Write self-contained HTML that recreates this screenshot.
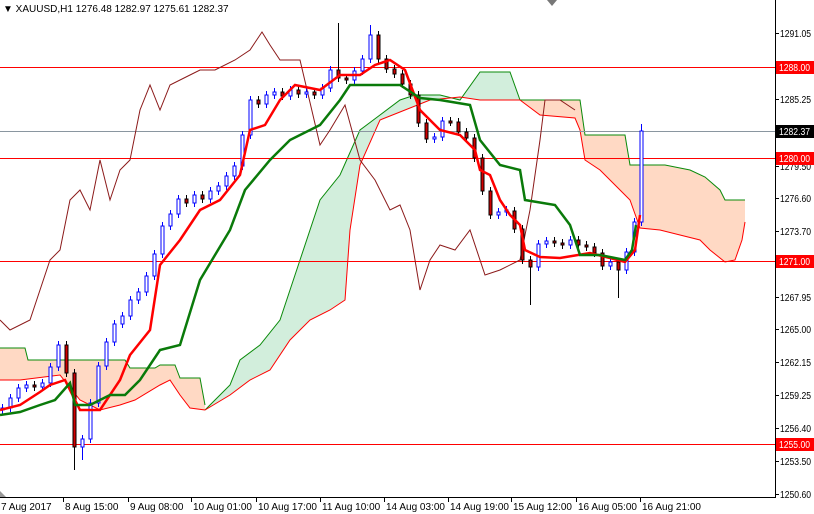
<!DOCTYPE html>
<html><head><meta charset="utf-8"><style>
html,body{margin:0;padding:0;background:#fff;width:814px;height:514px;overflow:hidden}
svg{display:block}
text{font-family:"Liberation Sans",sans-serif;font-size:10px;fill:#000}
</style></head><body>
<svg width="814" height="514" xmlns="http://www.w3.org/2000/svg">
<!-- clouds -->
<polygon points="0,348 25,348 28,360 125,360 130,368 155,368 160,365 175,365 180,378 200,378 205,405 205,410 190,408 180,395 170,380 160,385 135,400 120,405 100,410 80,400 60,375 20,380 0,380" fill="#ffd9c4"/>
<polyline points="0,348 25,348 28,360 125,360 130,368 155,368 160,365 175,365 180,378 200,378 205,405" fill="none" stroke="#0a8a0a"/>
<polyline points="0,380 20,380 60,375 80,400 100,410 120,405 135,400 160,385 170,380 180,395 190,408 205,410" fill="none" stroke="#f00"/>
<polygon points="205,410 215,400 230,385 240,360 260,345 280,320 300,260 320,200 340,175 360,130 380,115 400,100 415,95 440,95 460,100 480,72 510,72 520,100 530,100 480,100 460,97 430,100 400,112 380,120 360,165 350,230 345,300 330,310 310,320 290,340 270,370 250,380 230,395" fill="#d2eedc"/>
<polyline points="205,410 215,400 230,385 240,360 260,345 280,320 300,260 320,200 340,175 360,130 380,115 400,100 415,95 440,95 460,100 480,72 510,72 520,100 530,100" fill="none" stroke="#0a8a0a"/>
<polyline points="205,410 230,395 250,380 270,370 290,340 310,320 330,310 345,300 350,230 360,165 380,120 400,112 430,100 460,97 480,100 530,100" fill="none" stroke="#f00"/>
<polygon points="520,100 580,100 585,135 625,135 630,165 665,165 690,170 705,177 720,190 725,200 745,200 745,222 742,240 735,260 725,262 710,250 700,240 680,235 660,230 640,228 630,200 620,190 600,170 585,160 580,130 575,118 540,115" fill="#ffd9c4"/>
<polyline points="520,100 580,100 585,135 625,135 630,165 665,165 690,170 705,177 720,190 725,200 745,200" fill="none" stroke="#0a8a0a"/>
<polyline points="520,100 540,115 575,118 580,130 585,160 600,170 620,190 630,200 640,228 660,230 680,235 700,240 710,250 725,262 735,260 742,240 745,222" fill="none" stroke="#f00"/>
<!-- levels -->
<line x1="0" y1="67.5" x2="775" y2="67.5" stroke="#f00"/>
<line x1="0" y1="131.5" x2="775" y2="131.5" stroke="#8a96a0"/>
<line x1="0" y1="158.5" x2="775" y2="158.5" stroke="#f00"/>
<line x1="0" y1="261.5" x2="775" y2="261.5" stroke="#f00"/>
<line x1="0" y1="444.5" x2="775" y2="444.5" stroke="#f00"/>
<!-- chikou -->
<polyline points="0,320 10,330 30,320 50,260 60,250 70,200 80,190 90,210 100,160 110,200 120,170 130,160 140,110 150,85 160,110 170,85 190,75 200,70 215,70 235,60 250,50 262,32 270,45 280,60 300,60 320,145 330,130 345,105 360,160 375,180 390,210 400,205 410,230 420,290 430,260 440,245 455,250 470,230 485,275 500,270 520,260 530,210 540,140 545,100 560,100 575,110" fill="none" stroke="#8b1a1a"/>
<!-- candles -->
<path d="M2.5 404V414M10.5 394V412M18.5 384V402M26.5 381V392M42.5 379V391M50.5 363V387M58.5 341V371M82.5 435V460M90.5 399V443M98.5 362V407M106.5 338V370M114.5 320V346M122.5 312V328M130.5 296V320M138.5 288V304M146.5 272V296M154.5 250V280M162.5 222V258M170.5 210V230M178.5 195V218M194.5 191V207M210.5 187V203M218.5 182V195M226.5 172V190M234.5 162V180M242.5 131V170M250.5 96V139M266.5 91V108M274.5 88V99M290.5 86V100M306.5 88V98M322.5 84V99M330.5 66V92M354.5 67V84M362.5 55V75M370.5 25V63M434.5 133V143M442.5 117V141M498.5 208V219M506.5 206V216M538.5 240V271M546.5 237V248M570.5 236V249M610.5 258V270M626.5 248V274M634.5 218V256M641.5 124V226" stroke="#00f" fill="none"/>
<path d="M34.5 381V391M66.5 341V377M74.5 369V470M186.5 195V207M202.5 191V203M258.5 96V108M282.5 88V100M298.5 86V98M314.5 88V99M338.5 23V82M346.5 74V84M378.5 31V63M386.5 55V73M394.5 65V78M402.5 70V88M410.5 80V99M418.5 91V127M426.5 119V143M450.5 117V126M458.5 118V136M466.5 128V142M474.5 134V162M482.5 154V195M490.5 187V219M514.5 207V233M522.5 225V264M530.5 256V305M554.5 237V247M562.5 239V249M578.5 236V249M586.5 241V251M594.5 243V257M602.5 249V270M618.5 258V298" stroke="#000" fill="none"/>
<path d="M1 408h3v2h-3zM9 398h3v10h-3zM17 388h3v10h-3zM25 385h3v3h-3zM41 383h3v4h-3zM49 367h3v16h-3zM57 345h3v22h-3zM81 439h3v8h-3zM89 403h3v36h-3zM97 366h3v37h-3zM105 342h3v24h-3zM113 324h3v18h-3zM121 316h3v8h-3zM129 300h3v16h-3zM137 292h3v8h-3zM145 276h3v16h-3zM153 254h3v22h-3zM161 226h3v28h-3zM169 214h3v12h-3zM177 199h3v15h-3zM193 195h3v8h-3zM209 191h3v8h-3zM217 186h3v5h-3zM225 176h3v10h-3zM233 166h3v10h-3zM241 135h3v31h-3zM249 100h3v35h-3zM265 95h3v9h-3zM273 92h3v3h-3zM289 90h3v6h-3zM305 92h3v2h-3zM321 88h3v7h-3zM329 70h3v18h-3zM353 71h3v9h-3zM361 59h3v12h-3zM369 35h3v24h-3zM433 137h3v2h-3zM441 121h3v16h-3zM497 212h3v3h-3zM505 210h3v2h-3zM537 244h3v23h-3zM545 241h3v3h-3zM569 240h3v5h-3zM609 262h3v4h-3zM625 252h3v18h-3zM633 222h3v30h-3zM640 131h3v91h-3z" fill="#fff" stroke="#00f" stroke-width="1"/>
<path d="M33 385h3v2h-3zM65 345h3v28h-3zM73 373h3v74h-3zM185 199h3v4h-3zM201 195h3v4h-3zM257 100h3v4h-3zM281 92h3v4h-3zM297 90h3v4h-3zM313 92h3v3h-3zM337 70h3v8h-3zM345 78h3v2h-3zM377 35h3v24h-3zM385 59h3v10h-3zM393 69h3v5h-3zM401 74h3v10h-3zM409 84h3v11h-3zM417 95h3v28h-3zM425 123h3v16h-3zM449 121h3v2h-3zM457 122h3v10h-3zM465 132h3v6h-3zM473 138h3v20h-3zM481 158h3v33h-3zM489 191h3v24h-3zM513 211h3v18h-3zM521 229h3v31h-3zM529 260h3v7h-3zM553 241h3v2h-3zM561 243h3v2h-3zM577 240h3v5h-3zM585 245h3v2h-3zM593 247h3v6h-3zM601 253h3v13h-3zM617 262h3v8h-3z" fill="#d00000" stroke="#000" stroke-width="1"/>
<!-- tenkan / kijun -->
<polyline points="0,410 20,405 40,392 50,385 65,380 80,410 100,410 120,380 130,355 150,330 160,265 180,240 200,210 220,200 240,175 250,130 265,125 280,100 295,85 320,90 340,75 360,75 375,65 390,60 405,70 420,110 440,130 460,135 475,150 480,170 490,175 500,200 510,215 520,225 525,250 540,257 560,258 590,253 610,258 625,262 635,250 640,215" fill="none" stroke="#f00" stroke-width="2.5"/>
<polyline points="0,415 20,412 40,405 55,400 70,383 75,405 90,405 110,395 125,395 140,380 160,350 180,345 200,280 215,255 230,230 245,190 270,160 290,140 320,125 340,100 350,85 380,85 400,85 420,98 440,100 470,105 480,140 500,165 520,170 525,200 555,205 570,225 580,255 600,255 625,260 632,250 636,225" fill="none" stroke="#0a7a0a" stroke-width="2.5"/>
<!-- frame -->
<rect x="776" y="0" width="38" height="514" fill="#fff"/>
<rect x="0" y="498" width="814" height="16" fill="#fff"/>
<line x1="775.5" y1="0" x2="775.5" y2="497" stroke="#000"/>
<line x1="0" y1="497.5" x2="776" y2="497.5" stroke="#000"/>
<polygon points="0,491 6,497 0,497" fill="#999"/>
<polygon points="547,0 557,0 552,6" fill="#777"/>
<text x="3" y="12">▼ XAUUSD,H1  1276.48 1282.97 1275.61 1282.37</text>
<!-- price axis -->
<g stroke="#000">
<line x1="775" y1="33.5" x2="779" y2="33.5"/><line x1="775" y1="99.5" x2="779" y2="99.5"/><line x1="775" y1="166.5" x2="779" y2="166.5"/><line x1="775" y1="198.5" x2="779" y2="198.5"/><line x1="775" y1="231.5" x2="779" y2="231.5"/><line x1="775" y1="297.5" x2="779" y2="297.5"/><line x1="775" y1="329.5" x2="779" y2="329.5"/><line x1="775" y1="362.5" x2="779" y2="362.5"/><line x1="775" y1="395.5" x2="779" y2="395.5"/><line x1="775" y1="428.5" x2="779" y2="428.5"/><line x1="775" y1="461.5" x2="779" y2="461.5"/><line x1="775" y1="494.5" x2="779" y2="494.5"/>
</g>
<g>
<text x="780" y="37" textLength="31" lengthAdjust="spacingAndGlyphs">1291.05</text><text x="780" y="103" textLength="31" lengthAdjust="spacingAndGlyphs">1285.25</text><text x="780" y="170" textLength="31" lengthAdjust="spacingAndGlyphs">1279.50</text><text x="780" y="202" textLength="31" lengthAdjust="spacingAndGlyphs">1276.60</text><text x="780" y="235" textLength="31" lengthAdjust="spacingAndGlyphs">1273.70</text><text x="780" y="301" textLength="31" lengthAdjust="spacingAndGlyphs">1267.95</text><text x="780" y="333" textLength="31" lengthAdjust="spacingAndGlyphs">1265.00</text><text x="780" y="366" textLength="31" lengthAdjust="spacingAndGlyphs">1262.15</text><text x="780" y="399" textLength="31" lengthAdjust="spacingAndGlyphs">1259.25</text><text x="780" y="432" textLength="31" lengthAdjust="spacingAndGlyphs">1256.40</text><text x="780" y="465" textLength="31" lengthAdjust="spacingAndGlyphs">1253.50</text><text x="780" y="498" textLength="31" lengthAdjust="spacingAndGlyphs">1250.60</text>
</g>
<rect x="776" y="61" width="38" height="13" fill="#f00"/><text x="779" y="71" style="fill:#fff" textLength="31" lengthAdjust="spacingAndGlyphs">1288.00</text>
<rect x="776" y="125" width="38" height="13" fill="#000"/><text x="779" y="135" style="fill:#fff" textLength="31" lengthAdjust="spacingAndGlyphs">1282.37</text>
<rect x="776" y="152" width="38" height="13" fill="#f00"/><text x="779" y="162" style="fill:#fff" textLength="31" lengthAdjust="spacingAndGlyphs">1280.00</text>
<rect x="776" y="255" width="38" height="13" fill="#f00"/><text x="779" y="265" style="fill:#fff" textLength="31" lengthAdjust="spacingAndGlyphs">1271.00</text>
<rect x="776" y="438" width="38" height="13" fill="#f00"/><text x="779" y="448" style="fill:#fff" textLength="31" lengthAdjust="spacingAndGlyphs">1255.00</text>
<!-- time axis -->
<g stroke="#000">
<line x1="63.5" y1="497" x2="63.5" y2="502"/><line x1="128.5" y1="497" x2="128.5" y2="502"/><line x1="191.5" y1="497" x2="191.5" y2="502"/><line x1="256.5" y1="497" x2="256.5" y2="502"/><line x1="320.5" y1="497" x2="320.5" y2="502"/><line x1="384.5" y1="497" x2="384.5" y2="502"/><line x1="448.5" y1="497" x2="448.5" y2="502"/><line x1="511.5" y1="497" x2="511.5" y2="502"/><line x1="576.5" y1="497" x2="576.5" y2="502"/><line x1="640.5" y1="497" x2="640.5" y2="502"/>
</g>
<g>
<text x="1" y="510">7 Aug 2017</text><text x="65" y="510">8 Aug 15:00</text><text x="130" y="510">9 Aug 08:00</text><text x="193" y="510">10 Aug 01:00</text><text x="258" y="510">10 Aug 17:00</text><text x="322" y="510">11 Aug 10:00</text><text x="386" y="510">14 Aug 03:00</text><text x="450" y="510">14 Aug 19:00</text><text x="513" y="510">15 Aug 12:00</text><text x="578" y="510">16 Aug 05:00</text><text x="642" y="510">16 Aug 21:00</text>
</g>
</svg>
</body></html>
